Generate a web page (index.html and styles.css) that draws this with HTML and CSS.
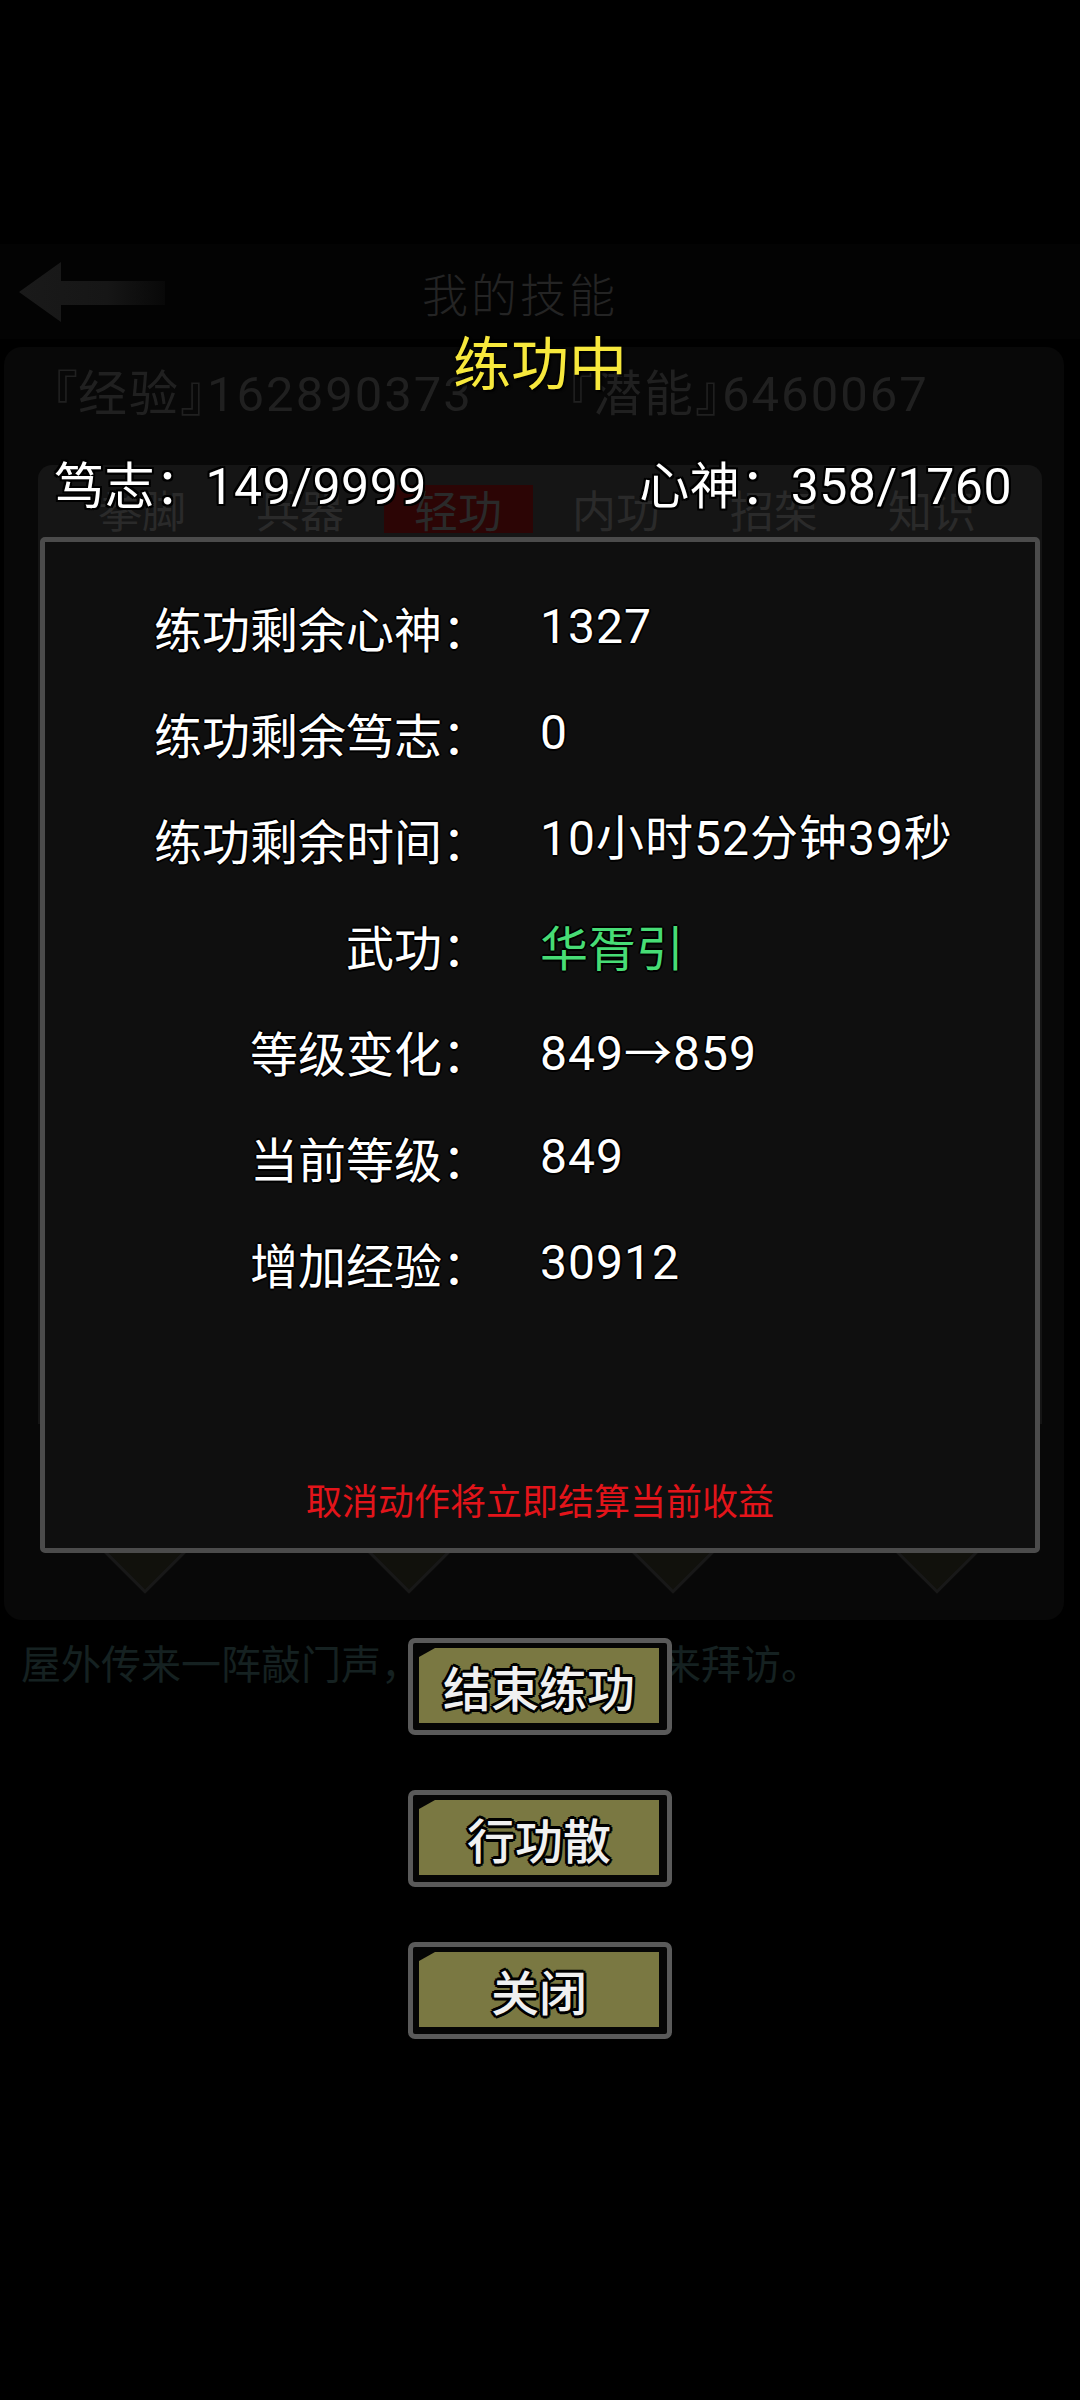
FILE: index.html
```html
<!DOCTYPE html>
<html lang="zh-CN">
<head>
<meta charset="utf-8">
<title>练功中</title>
<link rel="stylesheet" href="styles.css">
</head>
<body>
<div class="screen">
  <div class="bg">
    <div class="hdr">
      <svg class="back" viewBox="0 0 150 64" aria-hidden="true">
        <defs>
          <linearGradient id="fade" x1="0" y1="0" x2="1" y2="0">
            <stop offset="0" stop-color="#1a1a1a"/>
            <stop offset="0.6" stop-color="#161616"/>
            <stop offset="1" stop-color="#080808"/>
          </linearGradient>
        </defs>
        <polygon points="2,32 44,2 44,21 148,21 148,45 44,45 44,62" fill="url(#fade)"/>
      </svg>
      <div class="hdr-title">我的技能</div>
      <div></div>
    </div>
    <div class="panel">
      <div class="exp"><span class="e1"><span class="bl">『</span>经验<span class="br">』</span>162890373</span><span class="e2"><span class="bl">『</span>潜能<span class="br">』</span>6460067</span></div>
      <div class="tabpanel">
        <div class="tabs">
          <span class="tab">拳脚</span>
          <span class="tab">兵器</span>
          <span class="tab on">轻功</span>
          <span class="tab">内功</span>
          <span class="tab">招架</span>
          <span class="tab">知识</span>
        </div>
      </div>
      <div class="diamonds">
        <div class="dcell"><div class="dia"></div></div>
        <div class="dcell"><div class="dia"></div></div>
        <div class="dcell"><div class="dia"></div></div>
        <div class="dcell"><div class="dia"></div></div>
      </div>
    </div>
    <div class="msg">屋外传来一阵敲门声，有位江湖人前来拜访。</div>
  </div>

  <div class="overlay">
    <div class="title">练功中</div>
    <div class="stats">
      <span>笃志：149/9999</span>
      <span>心神：358/1760</span>
    </div>
    <div class="modal">
      <div class="rows">
        <div class="lbl">练功剩余心神：</div><div class="val">1327</div>
        <div class="lbl">练功剩余笃志：</div><div class="val">0</div>
        <div class="lbl">练功剩余时间：</div><div class="val">10小时52分钟39秒</div>
        <div class="lbl">武功：</div><div class="val green">华胥引</div>
        <div class="lbl">等级变化：</div><div class="val">849<span class="arr">→</span>859</div>
        <div class="lbl">当前等级：</div><div class="val">849</div>
        <div class="lbl">增加经验：</div><div class="val">30912</div>
      </div>
      <div class="note">取消动作将立即结算当前收益</div>
    </div>
    <div class="btns">
      <div class="btn"><div class="face">结束练功</div></div>
      <div class="btn"><div class="face">行功散</div></div>
      <div class="btn"><div class="face">关闭</div></div>
    </div>
  </div>
</div>
</body>
</html>
```
FILE: styles.css
```css
* { box-sizing: border-box; margin: 0; padding: 0; }
html, body { background: #000; }
body {
  width: 1080px;
  height: 2400px;
  overflow: hidden;
  font-family: Roboto, "Noto Sans CJK SC", sans-serif;
  color: #fff;
}
.screen { position: relative; width: 1080px; height: 2400px; background: #000; }

/* ghosted page underneath */
.bg { padding-top: 244px; }
.hdr {
  height: 95px;
  display: grid;
  grid-template-columns: 1fr auto 1fr;
  align-items: center;
  padding: 0 17px;
  background: #030303;
}
.back { width: 150px; height: 64px; display: block; }
.hdr-title {
  font-family: "Noto Sans CJK SC", sans-serif;
  font-weight: 300;
  font-size: 46px;
  color: #242424;
  letter-spacing: 3px;
  padding-right: 40px;
}
.panel {
  margin: 8px 16px 0 4px;
  height: 1273px;
  background: #080808;
  border-radius: 18px;
  padding-top: 20px;
  display: flex;
  flex-direction: column;
}
.exp {
  display: flex;
  white-space: nowrap;
  font-size: 49px;
  line-height: 56px;
  color: #202020;
  padding-left: 47px;
  letter-spacing: 2px;
}
.e1 { width: 515px; flex: none; }
.bl { margin-left: -22px; letter-spacing: 0; }
.br { margin-right: -22px; letter-spacing: 0; }
.tabpanel {
  margin: 42px 22px 0 34px;
  height: 959px;
  flex: none;
  background: #151515;
  border-radius: 14px 14px 0 0;
}
.tabs {
  height: 68px;
  padding-top: 20px;
  display: grid;
  grid-template-columns: repeat(6, 158px);
  padding-left: 25px;
  align-items: start;
}
.tab {
  justify-self: center;
  font-family: "Noto Sans CJK SC", sans-serif;
  font-size: 44px;
  line-height: 48px;
  color: #2a2a2a;
  width: 149px;
  text-align: center;
}
.tab.on { background: #2c0505; }
.diamonds {
  height: 170px;
  flex: none;
  display: grid;
  grid-template-columns: repeat(4, 264px);
  padding-left: 9px;
  align-items: center;
}
.dcell { display: flex; justify-content: center; }
.dia {
  width: 120px;
  height: 120px;
  transform: rotate(45deg);
  background: #11110c;
  border: 3px solid #181818;
}
.msg {
  margin-top: 14px;
  padding-left: 21px;
  white-space: nowrap;
  font-family: "Noto Sans CJK SC", sans-serif;
  font-size: 40px;
  line-height: 56px;
  color: #152121;
}

/* dialog layer */
.overlay {
  position: absolute;
  left: 0;
  top: 0;
  width: 100%;
  display: flex;
  flex-direction: column;
  align-items: center;
  padding-top: 325px;
}
.title {
  font-family: "Noto Sans CJK SC", sans-serif;
  font-size: 58px;
  line-height: 70px;
  color: #f7e83c;
  text-shadow: 2px 2px 2px #000, -1px -1px 2px #000;
}
.stats {
  align-self: stretch;
  display: flex;
  justify-content: space-between;
  padding: 0 68px 0 54px;
  margin-top: 62px;
  font-size: 50px;
  line-height: 60px;
  letter-spacing: 0.5px;
  color: #fff;
  text-shadow: 2px 0 #000, -2px 0 #000, 0 2px #000, 0 -2px #000, 2px 2px #000, -2px 2px #000, 2px -2px #000, -2px -2px #000;
}
.modal {
  margin-top: 20px;
  width: 1000px;
  height: 1016px;
  border: 5px solid #4b4b4b;
  border-radius: 5px;
  background: #0f0f0f;
  padding-top: 32px;
  display: flex;
  flex-direction: column;
}
.rows {
  display: grid;
  grid-template-columns: 445px 1fr;
  column-gap: 50px;
  grid-auto-rows: 106px;
  align-items: center;
  font-size: 48px;
  line-height: 56px;
  color: #fff;
  text-shadow: 2px 0 #000, -2px 0 #000, 0 2px #000, 0 -2px #000;
}
.lbl { text-align: right; font-family: "Noto Sans CJK SC", sans-serif; }
.val { white-space: nowrap; letter-spacing: 1px; }
.green { color: #47dc75; font-family: "Noto Sans CJK SC", sans-serif; letter-spacing: 0; }
.arr { font-family: "Noto Sans CJK SC", sans-serif; }
.note {
  margin-top: 158px;
  text-align: center;
  font-family: "Noto Sans CJK SC", sans-serif;
  font-size: 36px;
  line-height: 50px;
  color: #e3141a;
}
.btns {
  margin-top: 85px;
  display: flex;
  flex-direction: column;
  gap: 55px;
}
.btn {
  width: 264px;
  height: 97px;
  border: 5px solid #5a5a5a;
  border-radius: 7px;
  background: #050505;
  padding: 5px 8px 7px 6px;
}
.face {
  height: 100%;
  background: #7a7842;
  clip-path: polygon(0 9px, 16px 0, 100% 0, 100% 100%, 0 100%);
  display: flex;
  align-items: center;
  justify-content: center;
  font-family: "Noto Sans CJK SC", sans-serif;
  font-size: 48px;
  font-weight: 500;
  line-height: 1;
  color: #f0f0f0;
  text-shadow: 3px 0 #000, -3px 0 #000, 0 3px #000, 0 -3px #000, 2px 2px #000, -2px 2px #000, 2px -2px #000, -2px -2px #000;
}
```
